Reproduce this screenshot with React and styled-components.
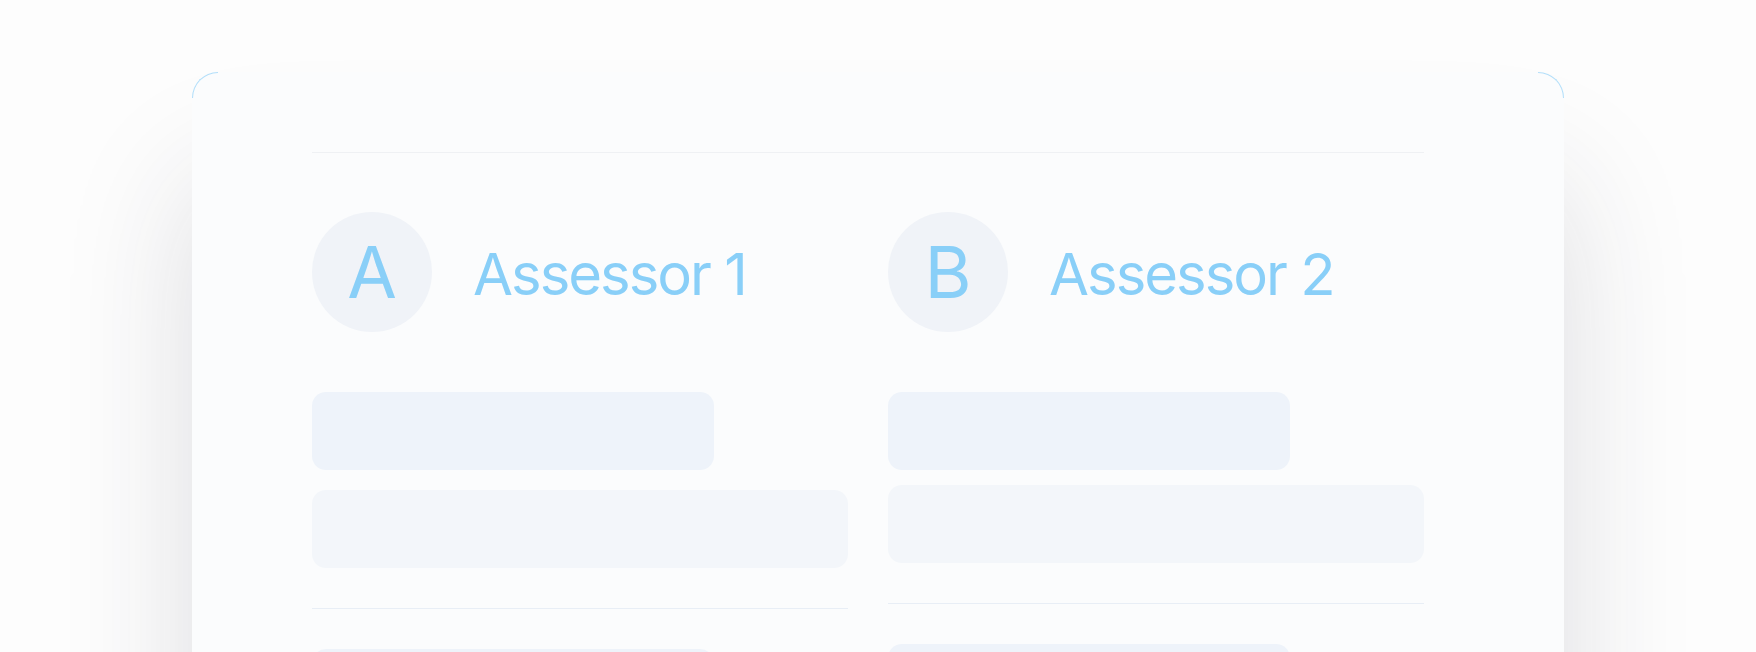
import React from "react";
import styled, { createGlobalStyle } from "styled-components";

const Global = createGlobalStyle`
  html, body {
    margin: 0;
    padding: 0;
    background: #fdfdfd;
    font-family: Inter, "Noto Sans", "Liberation Sans", sans-serif;
    overflow: hidden;
  }
`;

const Page = styled.div`
  width: 1756px;
  height: 652px;
  overflow: hidden;
  padding-top: 72px;
  box-sizing: border-box;
`;

const Card = styled.section`
  position: relative;
  width: 1372px;
  min-height: 700px;
  margin: 0 auto;
  box-sizing: border-box;
  padding: 80px 140px 0 120px;
  background: #fbfcfd;
  border-radius: 26px;
  box-shadow: 0 110px 130px rgba(40, 40, 60, 0.15);

  &::before,
  &::after {
    content: "";
    position: absolute;
    top: 0;
    width: 26px;
    height: 26px;
    box-sizing: border-box;
    border-top: 1px solid #b3dffa;
  }
  &::before {
    left: 0;
    border-left: 1px solid #b3dffa;
    border-top-left-radius: 26px;
  }
  &::after {
    right: 0;
    border-right: 1px solid #b3dffa;
    border-top-right-radius: 26px;
  }
`;

const Rule = styled.hr`
  margin: ${(p) => p.$mt || 0}px 0 0;
  border: 0;
  height: 1px;
  background: ${(p) => p.$color || "#eaeef4"};
`;

const Columns = styled.div`
  display: grid;
  grid-template-columns: 1fr 1fr;
  column-gap: 40px;
  margin-top: 59px;
`;

const Column = styled.div`
  display: flex;
  flex-direction: column;
`;

const Header = styled.div`
  display: flex;
  align-items: center;
  gap: 41px;
  height: 120px;
`;

const Avatar = styled.div`
  width: 120px;
  height: 120px;
  border-radius: 50%;
  background: #f0f3f8;
  display: flex;
  align-items: center;
  justify-content: center;
  color: #89cff8;
  font-size: 72px;
  font-weight: 400;
  line-height: 1;
  flex-shrink: 0;
`;

const Name = styled.h2`
  margin: 0;
  padding-top: 3px;
  color: #89cff8;
  font-size: 58px;
  font-weight: 400;
  line-height: 1;
  letter-spacing: -2px;
`;

const Bar = styled.div`
  width: ${(p) => p.$w};
  height: 78px;
  margin-top: ${(p) => p.$mt}px;
  border-radius: 14px;
  background: ${(p) => (p.$soft ? "#f3f6fa" : "#eef3fa")};
`;

const assessors = [
  { letter: "A", name: "Assessor 1", gap: 20 },
  { letter: "B", name: "Assessor 2", gap: 15 },
];

export default function App() {
  return (
    <>
      <Global />
      <Page>
        <Card>
          <Rule $color="#eff1f4" />
          <Columns>
            {assessors.map((a) => (
              <Column key={a.letter}>
                <Header>
                  <Avatar>{a.letter}</Avatar>
                  <Name>{a.name}</Name>
                </Header>
                <Bar $w="75%" $mt={60} />
                <Bar $w="100%" $mt={a.gap} $soft />
                <Rule $mt={40} $color="#e8eef6" />
                <Bar $w="75%" $mt={40} />
              </Column>
            ))}
          </Columns>
        </Card>
      </Page>
    </>
  );
}
